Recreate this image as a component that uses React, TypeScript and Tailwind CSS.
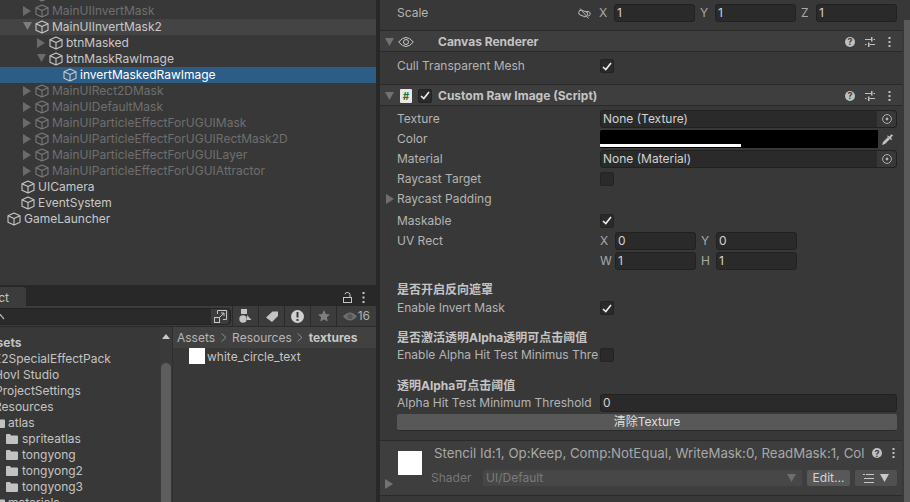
import React from "react";

const Cube = ({ dim = false }: { dim?: boolean }) => (
  <svg width="14" height="14" viewBox="0 0 14 14" fill="none" stroke={dim ? "#7a7a7a" : "#c8c8c8"} strokeWidth="1.1" strokeLinejoin="round" className="shrink-0">
    <path d="M7 1 L13 3.8 V10.2 L7 13 L1 10.2 V3.8 Z" />
    <path d="M1 3.8 L7 6.6 L13 3.8 M7 6.6 V13" />
  </svg>
);

const TriR = ({ color = "#6b6b6b" }: { color?: string }) => (
  <svg width="8" height="10" viewBox="0 0 8 10" className="shrink-0"><path d="M0 0 L8 5 L0 10 Z" fill={color} /></svg>
);
const TriD = ({ color = "#6b6b6b" }: { color?: string }) => (
  <svg width="9" height="8" viewBox="0 0 9 8" className="shrink-0"><path d="M0 0 H9 L4.5 8 Z" fill={color} /></svg>
);

type Node = { t: string; d: number; a?: "r" | "d"; dim?: boolean; cls?: string };
const nodes: Node[] = [
  { t: "", d: 1, dim: true },
  { t: "MainUIInvertMask", d: 1, a: "r", dim: true },
  { t: "MainUIInvertMask2", d: 1, a: "d", cls: "bg-[#444444]" },
  { t: "btnMasked", d: 2, a: "r" },
  { t: "btnMaskRawImage", d: 2, a: "d" },
  { t: "invertMaskedRawImage", d: 3, cls: "bg-[#2c5d87] text-white" },
  { t: "MainUIRect2DMask", d: 1, a: "r", dim: true },
  { t: "MainUIDefaultMask", d: 1, a: "r", dim: true },
  { t: "MainUIParticleEffectForUGUIMask", d: 1, a: "r", dim: true },
  { t: "MainUIParticleEffectForUGUIRectMask2D", d: 1, a: "r", dim: true },
  { t: "MainUIParticleEffectForUGUILayer", d: 1, a: "r", dim: true },
  { t: "MainUIParticleEffectForUGUIAttractor", d: 1, a: "r", dim: true },
  { t: "UICamera", d: 0.5 },
  { t: "EventSystem", d: 0.5 },
  { t: "GameLauncher", d: 0 },
];

const Hierarchy = () => (
  <div className="h-[285px] overflow-hidden bg-[#383838]">
    <div className="-mt-[13px]">
      {nodes.map((n, i) => {
        const pad = n.d === 0 ? 7 : n.d === 0.5 ? 21 : n.d === 1 ? 35 : n.d === 2 ? 49 : 63;
        return (
          <div key={i} className={`relative flex h-4 items-center gap-[3px] ${n.cls ?? ""} ${n.dim ? "text-[#6f6f6f]" : n.cls?.includes("text-white") ? "" : "text-[#c8c8c8]"}`} style={{ paddingLeft: pad }}>
            {n.a && (
              <span className="absolute top-[3px]" style={{ left: pad - 12 }}>
                {n.a === "r" ? <TriR /> : <TriD color={n.cls ? "#7d7d7d" : "#6b6b6b"} />}
              </span>
            )}
            <Cube dim={n.dim} />
            <span className="whitespace-nowrap">{n.t}</span>
          </div>
        );
      })}
    </div>
  </div>
);

const Folder = ({ className = "" }: { className?: string }) => (
  <svg width="12" height="10" viewBox="0 0 12 10" className={`shrink-0 ${className}`}><path d="M0 1 Q0 0 1 0 H4 L5 1.5 H11 Q12 1.5 12 2.5 V9 Q12 10 11 10 H1 Q0 10 0 9 Z" fill="#c2c2c2" /></svg>
);

const tree: { t: string; x: number; bold?: boolean; f?: boolean; a?: boolean }[] = [
  { t: "Assets", x: -19, bold: true },
  { t: "E2SpecialEffectPack", x: -6 },
  { t: "Hovl Studio", x: -6 },
  { t: "ProjectSettings", x: -5 },
  { t: "Resources", x: -6 },
  { t: "atlas", x: -7, a: true },
  { t: "spriteatlas", x: 6, f: true },
  { t: "tongyong", x: 6, f: true },
  { t: "tongyong2", x: 6, f: true },
  { t: "tongyong3", x: 6, f: true },
  { t: "materials", x: -7, a: true },
];

const ToolBtn = ({ children }: { children: React.ReactNode }) => (
  <div className="flex h-full w-[26px] items-center justify-center border-l border-[#2a2a2a]">{children}</div>
);

const Project = () => (
  <div className="flex min-h-0 flex-1 flex-col">
    <div className="flex h-[19px] items-stretch justify-between rounded-t-[3px] bg-[#282828]">
      <div className="flex w-[26px] items-center justify-end rounded-tr-[3px] bg-[#3c3c3c] pr-[17px] pt-[2px] text-[#c4c4c4]">
        <span className="whitespace-nowrap">Project</span>
      </div>
      <div className="flex items-center gap-[10px] pr-[11px] pt-[1px]">
        <svg width="9" height="11" viewBox="0 0 9 11" fill="none" stroke="#c8c8c8" strokeWidth="1"><rect x="0.5" y="5.5" width="8" height="5" /><path d="M7 5.5 V2.5 Q7 0.5 4.5 0.5 Q2 0.5 2 2.2" /></svg>
        <svg width="3" height="11" viewBox="0 0 3 11" fill="#c8c8c8"><rect x="0.5" y="0" width="2" height="2" /><rect x="0.5" y="4.5" width="2" height="2" /><rect x="0.5" y="9" width="2" height="2" /></svg>
      </div>
    </div>
    <div className="flex h-[21px] items-center justify-between border-b border-[#2a2a2a] bg-[#3c3c3c]">
      <div className="ml-[-4px] flex h-[17px] w-[235px] items-center rounded-[4px] border border-[#242424] bg-[#2a2a2a] pr-[1px]">
        <svg width="8" height="8" viewBox="0 0 8 8" fill="none" stroke="#b0b0b0" strokeWidth="1.2" className="ml-[1px] shrink-0"><path d="M1 1 L6 7" /></svg>
        <div className="flex-1" />
        <div className="flex h-full w-[18px] items-center justify-center rounded-r-[3px] bg-[#3c3c3c]">
          <svg width="13" height="13" viewBox="0 0 13 13" fill="none" stroke="#c4c4c4" strokeWidth="1"><path d="M3.5 4 V0.5 H12.5 V9.5 H9" /><rect x="0.5" y="7.5" width="5" height="5" /><path d="M6 7 L10 3 M7 3 H10 V6" /></svg>
        </div>
      </div>
      <div className="flex h-full items-center">
        <ToolBtn>
          <svg width="14" height="14" viewBox="0 0 14 14" fill="#c4c4c4"><path d="M2 0 H8 V5 H2 Z" /><circle cx="4" cy="10" r="3.7" /><path d="M8 6 L12.5 11 H8 Z" /></svg>
        </ToolBtn>
        <ToolBtn>
          <svg width="12" height="11" viewBox="0 0 12 11" fill="#c4c4c4"><path d="M0 6.5 L6.5 0.5 H12 V5 L6 11 Z" /></svg>
        </ToolBtn>
        <ToolBtn>
          <div className="flex h-[13px] w-[13px] items-center justify-center rounded-full bg-[#d0d0d0]">
            <svg width="3" height="9" viewBox="0 0 3 9" fill="#3c3c3c"><rect x="0.5" y="0" width="2" height="5.5" /><rect x="0.5" y="7" width="2" height="2" /></svg>
          </div>
        </ToolBtn>
        <ToolBtn>
          <svg width="12" height="12" viewBox="0 0 12 12" fill="#7e7e7e"><path d="M6 0 L7.8 4 L12 4.5 L8.9 7.3 L9.7 11.6 L6 9.5 L2.3 11.6 L3.1 7.3 L0 4.5 L4.2 4 Z" /></svg>
        </ToolBtn>
        <div className="flex h-full w-[40px] items-center justify-end gap-[1px] border-l border-[#2a2a2a] pr-[6px] text-[#b0b0b0]">
          <svg width="14" height="9" viewBox="0 0 14 9" fill="#6e6e6e" className="shrink-0"><path d="M0 4.5 Q7 -3.5 14 4.5 Q7 12.5 0 4.5 Z" /><circle cx="7" cy="4.5" r="2.6" fill="#565656" /></svg>
          <span>16</span>
        </div>
      </div>
    </div>
    <div className="flex min-h-0 flex-1 bg-[#383838]">
      <div className="w-[160px] overflow-hidden pt-[8px]">
        {tree.map((r) => (
          <div key={r.t} className="flex h-4 items-center whitespace-nowrap text-[#c4c4c4]" style={{ marginLeft: r.x }}>
            {r.f && <Folder className="mr-[4px]" />}
            {r.a && <Folder className="mr-[3px]" />}
            <span className={r.bold ? "font-bold" : ""}>{r.t}</span>
          </div>
        ))}
      </div>
      <div className="flex w-[12px] flex-col items-center bg-[#3a3a3a] pt-[7px]">
        <svg width="8" height="5" viewBox="0 0 8 5"><path d="M4 0 L8 5 H0 Z" fill="#c8c8c8" /></svg>
        <div className="mt-[24px] w-[10px] flex-1 rounded-t-[5px] bg-[#5d5d5d]" />
      </div>
      <div className="flex min-w-0 flex-1 flex-col border-l border-[#2e2e2e]">
        <div className="flex h-[21px] items-center gap-[5.5px] bg-[#414141] pl-[4px] text-[#b5b5b5]">
          <span>Assets</span>
          <svg width="6" height="9" viewBox="0 0 6 9" fill="none" stroke="#8a8a8a"><path d="M0.5 0.5 L5 4.5 L0.5 8.5" /></svg>
          <span>Resources</span>
          <svg width="6" height="9" viewBox="0 0 6 9" fill="none" stroke="#8a8a8a"><path d="M0.5 0.5 L5 4.5 L0.5 8.5" /></svg>
          <span className="font-bold text-[#c8c8c8]">textures</span>
        </div>
        <div className="flex items-start gap-[2px] pl-[16px] text-[#c4c4c4]">
          <div className="h-4 w-4 bg-white" />
          <span className="mt-[1px]">white_circle_text</span>
        </div>
      </div>
    </div>
  </div>
);

const Check = ({ on = true }: { on?: boolean }) => (
  <div className="flex h-[14px] w-[14px] shrink-0 items-center justify-center rounded-[2px] border border-[#232323] bg-[#2a2a2a]">
    {on && (
      <svg width="10" height="9" viewBox="0 0 10 9" fill="none" stroke="#eeeeee" strokeWidth="1.6"><path d="M1 5 L3.8 7.5 L9 1" /></svg>
    )}
  </div>
);

const Num = ({ v }: { v: string }) => (
  <div className="flex h-[18px] w-[81px] items-center rounded-[3px] border border-[#212121] bg-[#2a2a2a] pl-[2px] text-[#d2d2d2]">{v}</div>
);

const Axis = ({ l, v, w = 15 }: { l: string; v: string; w?: number }) => (
  <div className="flex items-center">
    <span className="text-[#a8a8a8]" style={{ width: w }}>{l}</span>
    <Num v={v} />
  </div>
);

const Target = () => (
  <div className="flex h-full w-[19px] items-center justify-center rounded-r-[3px] bg-[#383838]">
    <svg width="10" height="10" viewBox="0 0 10 10" fill="none" stroke="#b0b0b0"><circle cx="5" cy="5" r="4.4" /><circle cx="5" cy="5" r="1.4" fill="#b0b0b0" stroke="none" /></svg>
  </div>
);

const ObjField = ({ v }: { v: string }) => (
  <div className="flex h-[18px] flex-1 items-center justify-between rounded-[3px] border border-[#212121] bg-[#2a2a2a] pl-[2px] text-[#d2d2d2]">
    <span>{v}</span>
    <Target />
  </div>
);

const Row = ({ label, h = 20, children, className = "" }: { label?: string; h?: number; children?: React.ReactNode; className?: string }) => (
  <div className={`flex items-center pl-[17px] pr-[5px] ${className}`} style={{ height: h }}>
    <span className="mr-[2px] w-[201px] shrink-0 overflow-hidden whitespace-nowrap text-[#b4b4b4]">{label}</span>
    {children}
  </div>
);

const Help = () => (
  <div className="flex h-[10px] w-[10px] items-center justify-center rounded-full bg-[#c0c0c0] text-[9px] font-bold leading-none text-[#3e3e3e]">?</div>
);

const HeadIcons = () => (
  <div className="flex items-center pr-[11px]">
    <Help />
    <svg width="10" height="10" viewBox="0 0 10 10" fill="#c0c0c0" className="ml-[10px]"><rect x="0" y="2" width="6" height="1" /><rect x="6" y="0" width="1.5" height="4.5" /><rect x="8.5" y="2" width="1.5" height="1" /><rect x="0" y="7" width="1.5" height="1" /><rect x="3" y="5.5" width="1.5" height="4.5" /><rect x="4.5" y="7" width="5.5" height="1" /></svg>
    <svg width="3" height="10" viewBox="0 0 3 10" fill="#c0c0c0" className="ml-[13px]"><rect x="0.5" width="2" height="2" /><rect x="0.5" y="4" width="2" height="2" /><rect x="0.5" y="8" width="2" height="2" /></svg>
  </div>
);

const Header = ({ icon, title }: { icon: React.ReactNode; title: string }) => (
  <div className="relative flex h-[22px] items-center justify-between border-y border-y-[#2a2a2a] bg-[#3e3e3e] pt-[1px]">
    <div className="flex items-center">
      <span className="ml-[5px] w-[13px]"><TriD color="#727272" /></span>
      <span className="flex w-[40px] items-center">{icon}</span>
      <span className="font-bold text-[#c4c4c4]">{title}</span>
    </div>
    <HeadIcons />
  </div>
);

const Heading = ({ text, h, pt }: { text: string; h: number; pt: number }) => (
  <div className="flex items-center pl-[17px] font-bold text-[#c4c4c4]" style={{ height: h, paddingTop: pt }}>{text}</div>
);

const Inspector = () => (
  <div className="flex min-w-0 flex-1">
    <div className="min-w-0 flex-1 bg-[#383838]">
      <div className="flex h-[26px] items-center pl-[17px] pr-[5px]">
        <span className="w-[182px] text-[#b4b4b4]">Scale</span>
        <span className="flex w-[21px] items-center">
          <svg width="13" height="11" viewBox="0 0 13 11" fill="none" stroke="#b4b4b4" strokeWidth="1"><rect x="0.8" y="2.8" width="9" height="5" rx="2.5" transform="rotate(20 5 5)" /><path d="M7 3.5 H10 Q12.5 3.8 12.3 6 Q12 8 10 8" /><path d="M2 0.5 L10.5 10.5" /></svg>
        </span>
        <div className="flex gap-[5px]">
          <Axis l="X" v="1" /><Axis l="Y" v="1" /><Axis l="Z" v="1" />
        </div>
      </div>
      <div className="h-[4px]" />
      <Header
        title="Canvas Renderer"
        icon={<svg width="16" height="12" viewBox="0 0 16 12" fill="none" stroke="#c8c8c8"><path d="M0.7 6 Q8 -3 15.3 6 Q8 15 0.7 6 Z" /><circle cx="8" cy="6" r="2.5" /></svg>}
      />
      <Row label="Cull Transparent Mesh" h={32} className="pb-[4px]"><Check /></Row>
      <Header
        title="Custom Raw Image (Script)"
        icon={
          <span className="flex items-center">
            <span className="ml-[2px] flex h-[14px] w-[12px] items-center justify-center rounded-[1px] bg-[#e8e8e8] text-[10px] font-bold leading-none text-[#1f6f2b]">#</span>
            <span className="ml-[6px]"><Check /></span>
          </span>
        }
      />
      <div className="h-[3px]" />
      <Row label="Texture"><ObjField v="None (Texture)" /></Row>
      <Row label="Color">
        <div className="relative flex h-[18px] flex-1 overflow-hidden rounded-[2px] bg-[#2a2a2a]">
          <div className="relative flex-1 bg-black">
            <div className="absolute bottom-[1px] left-0 h-[3px] w-[141px] bg-white" />
          </div>
          <div className="flex w-[19px] items-center justify-center bg-[#383838]">
            <svg width="11" height="11" viewBox="0 0 11 11" fill="#c0c0c0"><path d="M0 11 L1 8 L6 3 L8 5 L3 10 Z" /><path d="M5.5 1.5 L7.5 2.5 L9 0.5 Q10.5 0 11 1.5 L9 3.5 L10 5.5 L9 6 L5 2 Z" /></svg>
          </div>
        </div>
      </Row>
      <Row label="Material"><ObjField v="None (Material)" /></Row>
      <Row label="Raycast Target"><Check on={false} /></Row>
      <div className="relative">
        <span className="absolute left-[6px] top-[5px]"><TriR color="#6f6f6f" /></span>
        <Row label="Raycast Padding" h={21} className="pb-[2px]" />
      </div>
      <Row label="Maskable" h={21}><Check /></Row>
      <Row label="UV Rect">
        <div className="flex gap-[5px]"><Axis l="X" v="0" /><Axis l="Y" v="0" /></div>
      </Row>
      <Row h={20}>
        <div className="flex gap-[5px]"><Axis l="W" v="1" /><Axis l="H" v="1" /></div>
      </Row>
      <Heading text="是否开启反向遮罩" h={20} pt={17} />
      <div className="h-[7px]" />
      <Row label="Enable Invert Mask" h={20}><Check /></Row>
      <Heading text="是否激活透明Alpha透明可点击阈值" h={28} pt={12} />
      <Row label="Enable Alpha Hit Test Minimus Threshold" h={18}><Check on={false} /></Row>
      <Heading text="透明Alpha可点击阈值" h={30} pt={14} />
      <Row label="Alpha Hit Test Minimum Threshold" h={18}>
        <div className="flex h-[18px] flex-1 items-center rounded-[3px] border border-[#212121] bg-[#2a2a2a] pl-[2px] text-[#d2d2d2]">0</div>
      </Row>
      <div className="pl-[17px] pr-[5px] pt-[2px]">
        <div className="flex h-[17px] items-center justify-center rounded-[2px] border-b border-[#2a2a2a] bg-[#585858] text-[#dedede]">清除Texture</div>
      </div>
      <div className="h-[9px]" />
      <div className="relative h-[56px] border-y border-y-[#2a2a2a] bg-[#3e3e3e]">
        <span className="absolute left-[5px] top-[38px]"><TriR color="#727272" /></span>
        <div className="absolute left-[18px] top-[10px] h-6 w-6 bg-white" />
        <div className="absolute left-[54px] right-0 top-[3px] flex h-[18px] items-center text-[#a8a8a8]">
          <span className="whitespace-nowrap text-[13.25px]">Stencil Id:1, Op:Keep, Comp:NotEqual, WriteMask:0, ReadMask:1, Col</span>
        </div>
        <div className="absolute right-[20px] top-[7px]"><Help /></div>
        <svg width="3" height="10" viewBox="0 0 3 10" fill="#c0c0c0" className="absolute right-[7px] top-[7px]"><rect x="0.5" width="2" height="2" /><rect x="0.5" y="4" width="2" height="2" /><rect x="0.5" y="8" width="2" height="2" /></svg>
        <div className="absolute left-[51px] right-[5px] top-[29px] flex h-[16px] items-center text-[#777777]">
          <span className="w-[52px]">Shader</span>
          <div className="flex h-full w-[319px] items-center justify-between rounded-[2px] bg-[#474747] pl-[3px] pr-[6px] text-[#7b7b7b]">
            <span>UI/Default</span>
            <TriD color="#6e6e6e" />
          </div>
          <div className="ml-[5px] flex h-full w-[43px] items-center justify-center rounded-[2px] bg-[#585858] text-[#d4d4d4]">Edit...</div>
          <div className="ml-[5px] flex h-full w-[42px] items-center justify-center gap-[6px] rounded-[2px] bg-[#505050]">
            <svg width="11" height="9" viewBox="0 0 11 9" fill="#c8c8c8"><rect x="0" width="2" height="1" /><rect x="3" width="8" height="1" /><rect x="1" y="4" width="2" height="1" /><rect x="3" y="4" width="8" height="1" /><rect x="1" y="8" width="2" height="1" /><rect x="3" y="8" width="8" height="1" /></svg>
            <TriD color="#c8c8c8" />
          </div>
        </div>
      </div>
    </div>
    <div className="flex w-[8px] flex-col bg-[#383838]">
      <div className="h-[20px]" />
      <div className="ml-[2px] flex-1 bg-[#5a5a5a]" />
    </div>
  </div>
);

export default function App() {
  return (
    <div className="flex h-[502px] w-[910px] overflow-hidden bg-[#282828] text-[12px] leading-4" style={{ fontFamily: 'Inter, "Noto Sans CJK SC", sans-serif' }}>
      <div className="flex w-[376px] shrink-0 flex-col gap-[2px]">
        <Hierarchy />
        <Project />
      </div>
      <div className="w-[4px] shrink-0" />
      <Inspector />
    </div>
  );
}
